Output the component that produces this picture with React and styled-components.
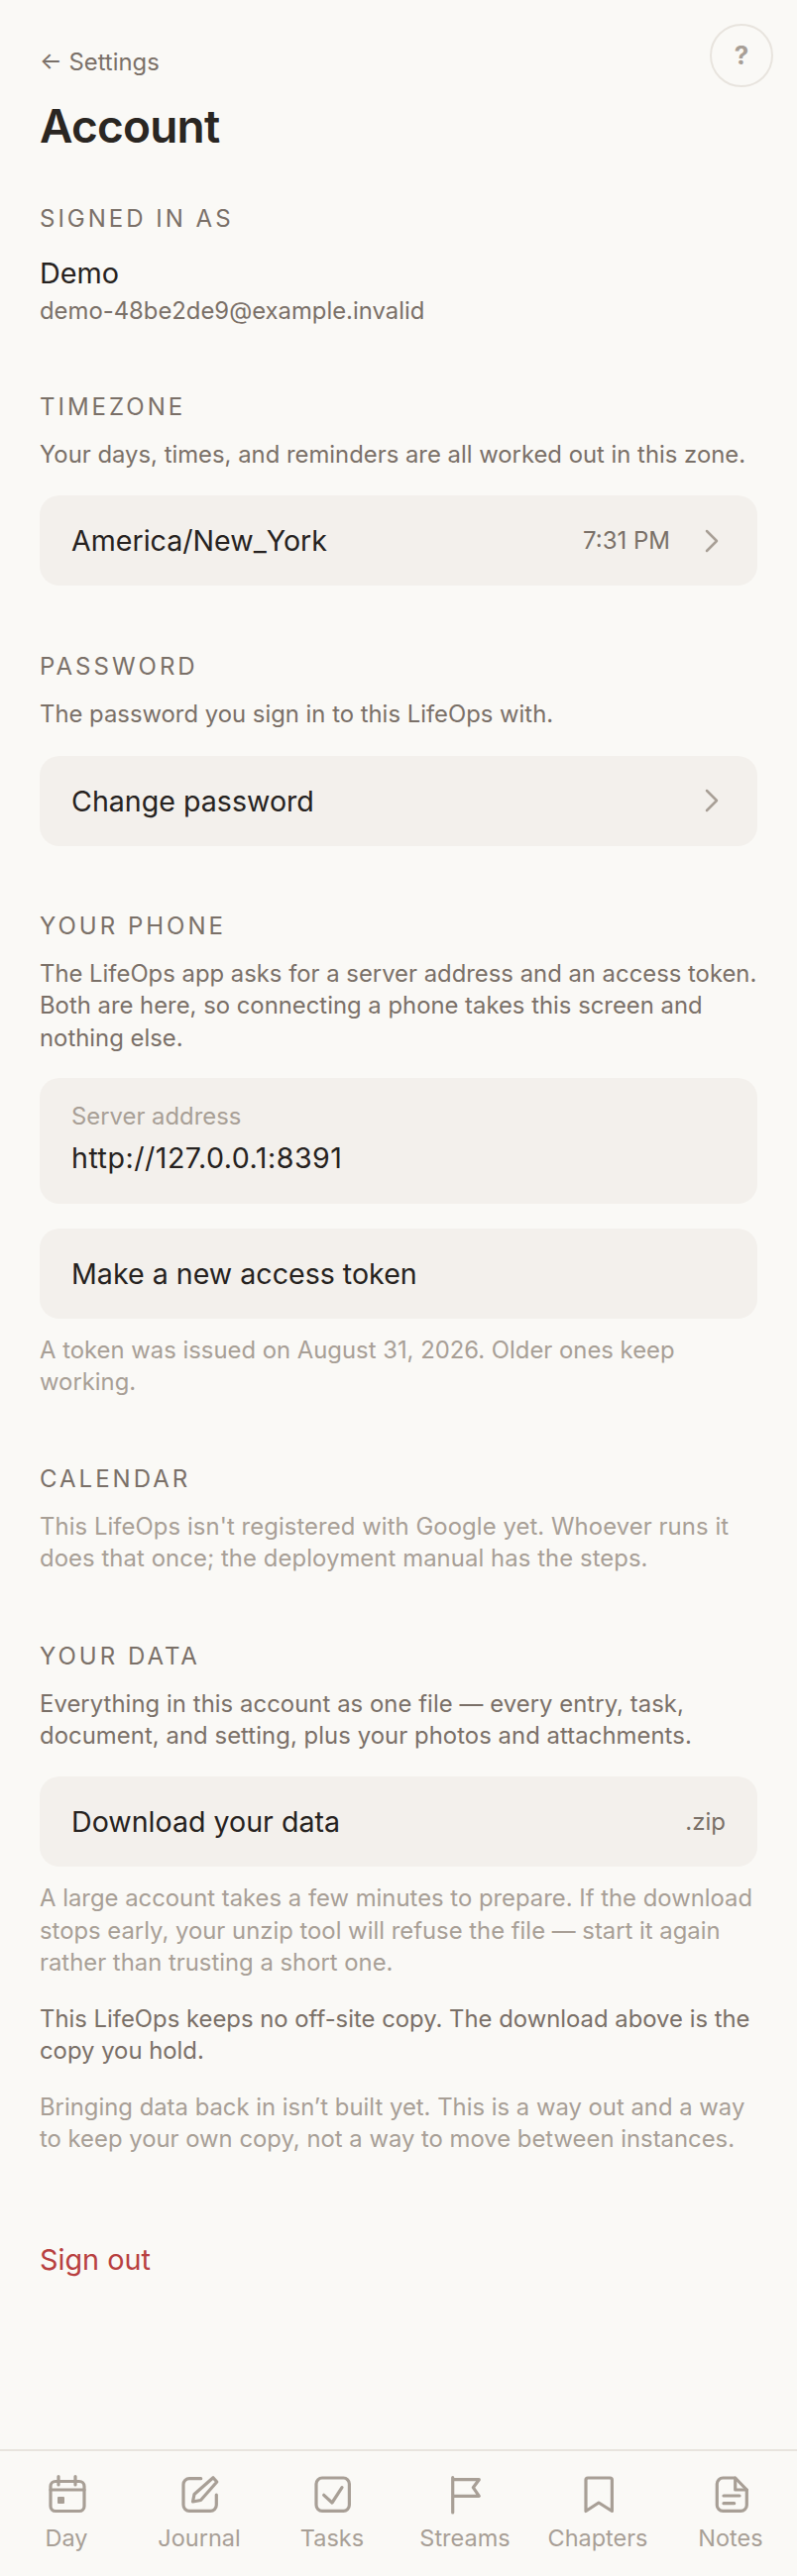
import styled, { createGlobalStyle } from "styled-components";
import { ChevronRight } from "lucide-react";

const GlobalStyle = createGlobalStyle`
  html, body {
    margin: 0;
    padding: 0;
    background: #faf9f6;
  }
  body {
    font-family: Inter, "Liberation Sans", sans-serif;
    color: #262220;
  }
  * { box-sizing: border-box; }
`;

const Page = styled.div`
  position: relative;
  width: 804px;
  height: 2600px;
  display: flex;
  flex-direction: column;
  background: #faf9f6;
`;

const Main = styled.main`
  flex: 1;
  padding: 46px 40px 0;
`;

const HelpButton = styled.div`
  position: absolute;
  top: 24px;
  right: 24px;
  width: 64px;
  height: 64px;
  padding-bottom: 2px;
  border-radius: 50%;
  border: 2px solid #e8e4de;
  display: flex;
  align-items: center;
  justify-content: center;
  color: #a89f96;
  font-size: 26px;
  font-weight: 700;
`;

const BackLink = styled.div`
  height: 34px;
  line-height: 34px;
  font-size: 23.85px;
  color: #7a7068;
`;

const Title = styled.h1`
  margin: 18px 0 0;
  font-size: 46px;
  line-height: 58px;
  font-weight: 600;
  letter-spacing: -0.8px;
  color: #2a2622;
`;

const Section = styled.section`
  margin-top: ${(p) => p.$gap || 65}px;
`;

const Label = styled.h2`
  margin: 0;
  font-size: 24px;
  line-height: 32px;
  font-weight: 400;
  letter-spacing: 3px;
  color: #7a7068;
`;

const Name = styled.div`
  margin-top: 19px;
  font-size: 28.8px;
  line-height: 40px;
  color: #262220;
`;

const Email = styled.div`
  margin-top: 1px;
  font-size: 23.85px;
  line-height: 34px;
  color: #7a7068;
`;

const Text = styled.p`
  margin: ${(p) => p.$top ?? 0}px 0 0;
  font-size: 23.85px;
  line-height: 32.4px;
  letter-spacing: ${(p) => p.$track ?? 0}px;
  color: ${(p) => (p.$muted ? "#a89f96" : "#7a7068")};
`;

const Row = styled.div`
  margin-top: ${(p) => p.$top ?? 25}px;
  height: 91px;
  padding: 0 32px;
  display: flex;
  align-items: center;
  gap: 22px;
  border-radius: 20px;
  background: #f3f0ec;
  font-size: 28.6px;
  color: #262220;
`;

const RowLabel = styled.span`
  flex: 1;
`;

const RowHint = styled.span`
  font-size: 24px;
  color: #7a7068;
`;

const Chevron = styled(ChevronRight)`
  width: 40px;
  height: 40px;
  margin-right: -6px;
  color: #a89f96;
  stroke-width: 1.5;
`;

const Field = styled.div`
  margin-top: 24px;
  height: 127px;
  padding: 24px 32px 0;
  border-radius: 20px;
  background: #f3f0ec;
`;

const FieldLabel = styled.div`
  font-size: 23.85px;
  line-height: 30px;
  color: #a89f96;
`;

const FieldValue = styled.div`
  margin-top: 7px;
  font-size: 28.6px;
  line-height: 40px;
  letter-spacing: 0.5px;
  color: #262220;
`;

const SignOut = styled.div`
  margin-top: 86px;
  font-size: 28.8px;
  line-height: 40px;
  color: #b84040;
`;

const Nav = styled.nav`
  height: 128px;
  flex: none;
  border-top: 2px solid #e8e4de;
  display: grid;
  grid-template-columns: repeat(6, 1fr);
  padding: 23px 0 0;
`;

const NavItem = styled.div`
  display: flex;
  flex-direction: column;
  align-items: center;
  gap: 10px;
  color: #a89f96;
  font-size: 23.5px;
  line-height: 30px;
`;

const NavIcon = styled.svg`
  width: 40px;
  height: 40px;
  overflow: visible;
  fill: none;
  stroke: currentColor;
  stroke-width: 3.2;
  stroke-linecap: round;
  stroke-linejoin: round;
`;

const navItems = [
  {
    name: "Day",
    icon: (
      <>
        <rect x="4" y="7.5" width="34" height="30" rx="5" />
        <path d="M4 16h34M12 2.5V11M29 2.5V11" />
        <rect x="11" y="23" width="7" height="7" rx="1" fill="currentColor" stroke="none" />
      </>
    ),
  },
  {
    name: "Journal",
    icon: (
      <>
        <path d="M21.7 4.7H10a6 6 0 0 0-6 6v20.6a6 6 0 0 0 6 6h21.3a6 6 0 0 0 6-6V21" />
        <path d="M13.5 28 15 20.5 34 3.7 37.8 8 21.5 26.5z" />
      </>
    ),
  },
  {
    name: "Tasks",
    icon: (
      <>
        <rect x="4" y="4" width="33.4" height="33.3" rx="6" />
        <path d="m11.7 21.3 8.3 7.7 10-15.3" />
      </>
    ),
  },
  {
    name: "Streams",
    icon: <path d="M7.7 3.7V39M7.7 5.7h26.6l-6 8 6 8.6H7.7" />,
  },
  {
    name: "Chapters",
    icon: <path d="M10 4h22.4a2 2 0 0 1 2 2v31.5L21 29 8 37.5V6a2 2 0 0 1 2-2z" />,
  },
  {
    name: "Notes",
    icon: (
      <>
        <path d="M24.7 4H12.3a6 6 0 0 0-6 6v21.4a6 6 0 0 0 6 6h18a6 6 0 0 0 6-6V16z" />
        <path d="M24.7 4v12h11.6M13 22h16M13 29.7h10.7" />
      </>
    ),
  },
];

export default function App() {
  return (
    <Page>
      <GlobalStyle />
      <HelpButton>?</HelpButton>
      <Main>
        <BackLink>← Settings</BackLink>
        <Title>Account</Title>

        <Section $gap={49}>
          <Label>SIGNED IN AS</Label>
          <Name>Demo</Name>
          <Email>demo-48be2de9@example.invalid</Email>
        </Section>

        <Section $gap={64}>
          <Label>TIMEZONE</Label>
          <Text $top={16}>Your days, times, and reminders are all worked out in this zone.</Text>
          <Row>
            <RowLabel>America/New_York</RowLabel>
            <RowHint>7:31 PM</RowHint>
            <Chevron />
          </Row>
        </Section>

        <Section $gap={66}>
          <Label>PASSWORD</Label>
          <Text $top={16}>The password you sign in to this LifeOps with.</Text>
          <Row>
            <RowLabel>Change password</RowLabel>
            <Chevron />
          </Row>
        </Section>

        <Section>
          <Label>YOUR PHONE</Label>
          <Text $top={16}>
            The LifeOps app asks for a server address and an access token. Both are here, so
            connecting a phone takes this screen and nothing else.
          </Text>
          <Field>
            <FieldLabel>Server address</FieldLabel>
            <FieldValue>http://127.0.0.1:8391</FieldValue>
          </Field>
          <Row>
            <RowLabel>Make a new access token</RowLabel>
          </Row>
          <Text $muted $top={16}>
            A token was issued on August 31, 2026. Older ones keep working.
          </Text>
        </Section>

        <Section>
          <Label>CALENDAR</Label>
          <Text $muted $top={16} $track={0.08}>
            This LifeOps isn't registered with Google yet. Whoever runs it does that once; the
            deployment manual has the steps.
          </Text>
        </Section>

        <Section $gap={66}>
          <Label>YOUR DATA</Label>
          <Text $top={16} $track={0.06}>
            Everything in this account as one file — every entry, task, document, and setting,
            plus your photos and attachments.
          </Text>
          <Row>
            <RowLabel>Download your data</RowLabel>
            <RowHint>.zip</RowHint>
          </Row>
          <Text $muted $top={16}>
            A large account takes a few minutes to prepare. If the download stops early, your
            unzip tool will refuse the file — start it again rather than trusting a short one.
          </Text>
          <Text $top={24}>
            This LifeOps keeps no off-site copy. The download above is the copy you hold.
          </Text>
          <Text $muted $top={24}>
            Bringing data back in isn’t built yet. This is a way out and a way to keep your own
            copy, not a way to move between instances.
          </Text>
        </Section>

        <SignOut>Sign out</SignOut>
      </Main>

      <Nav>
        {navItems.map((item) => (
          <NavItem key={item.name}>
            <NavIcon viewBox="0 0 40 40">{item.icon}</NavIcon>
            {item.name}
          </NavItem>
        ))}
      </Nav>
    </Page>
  );
}
